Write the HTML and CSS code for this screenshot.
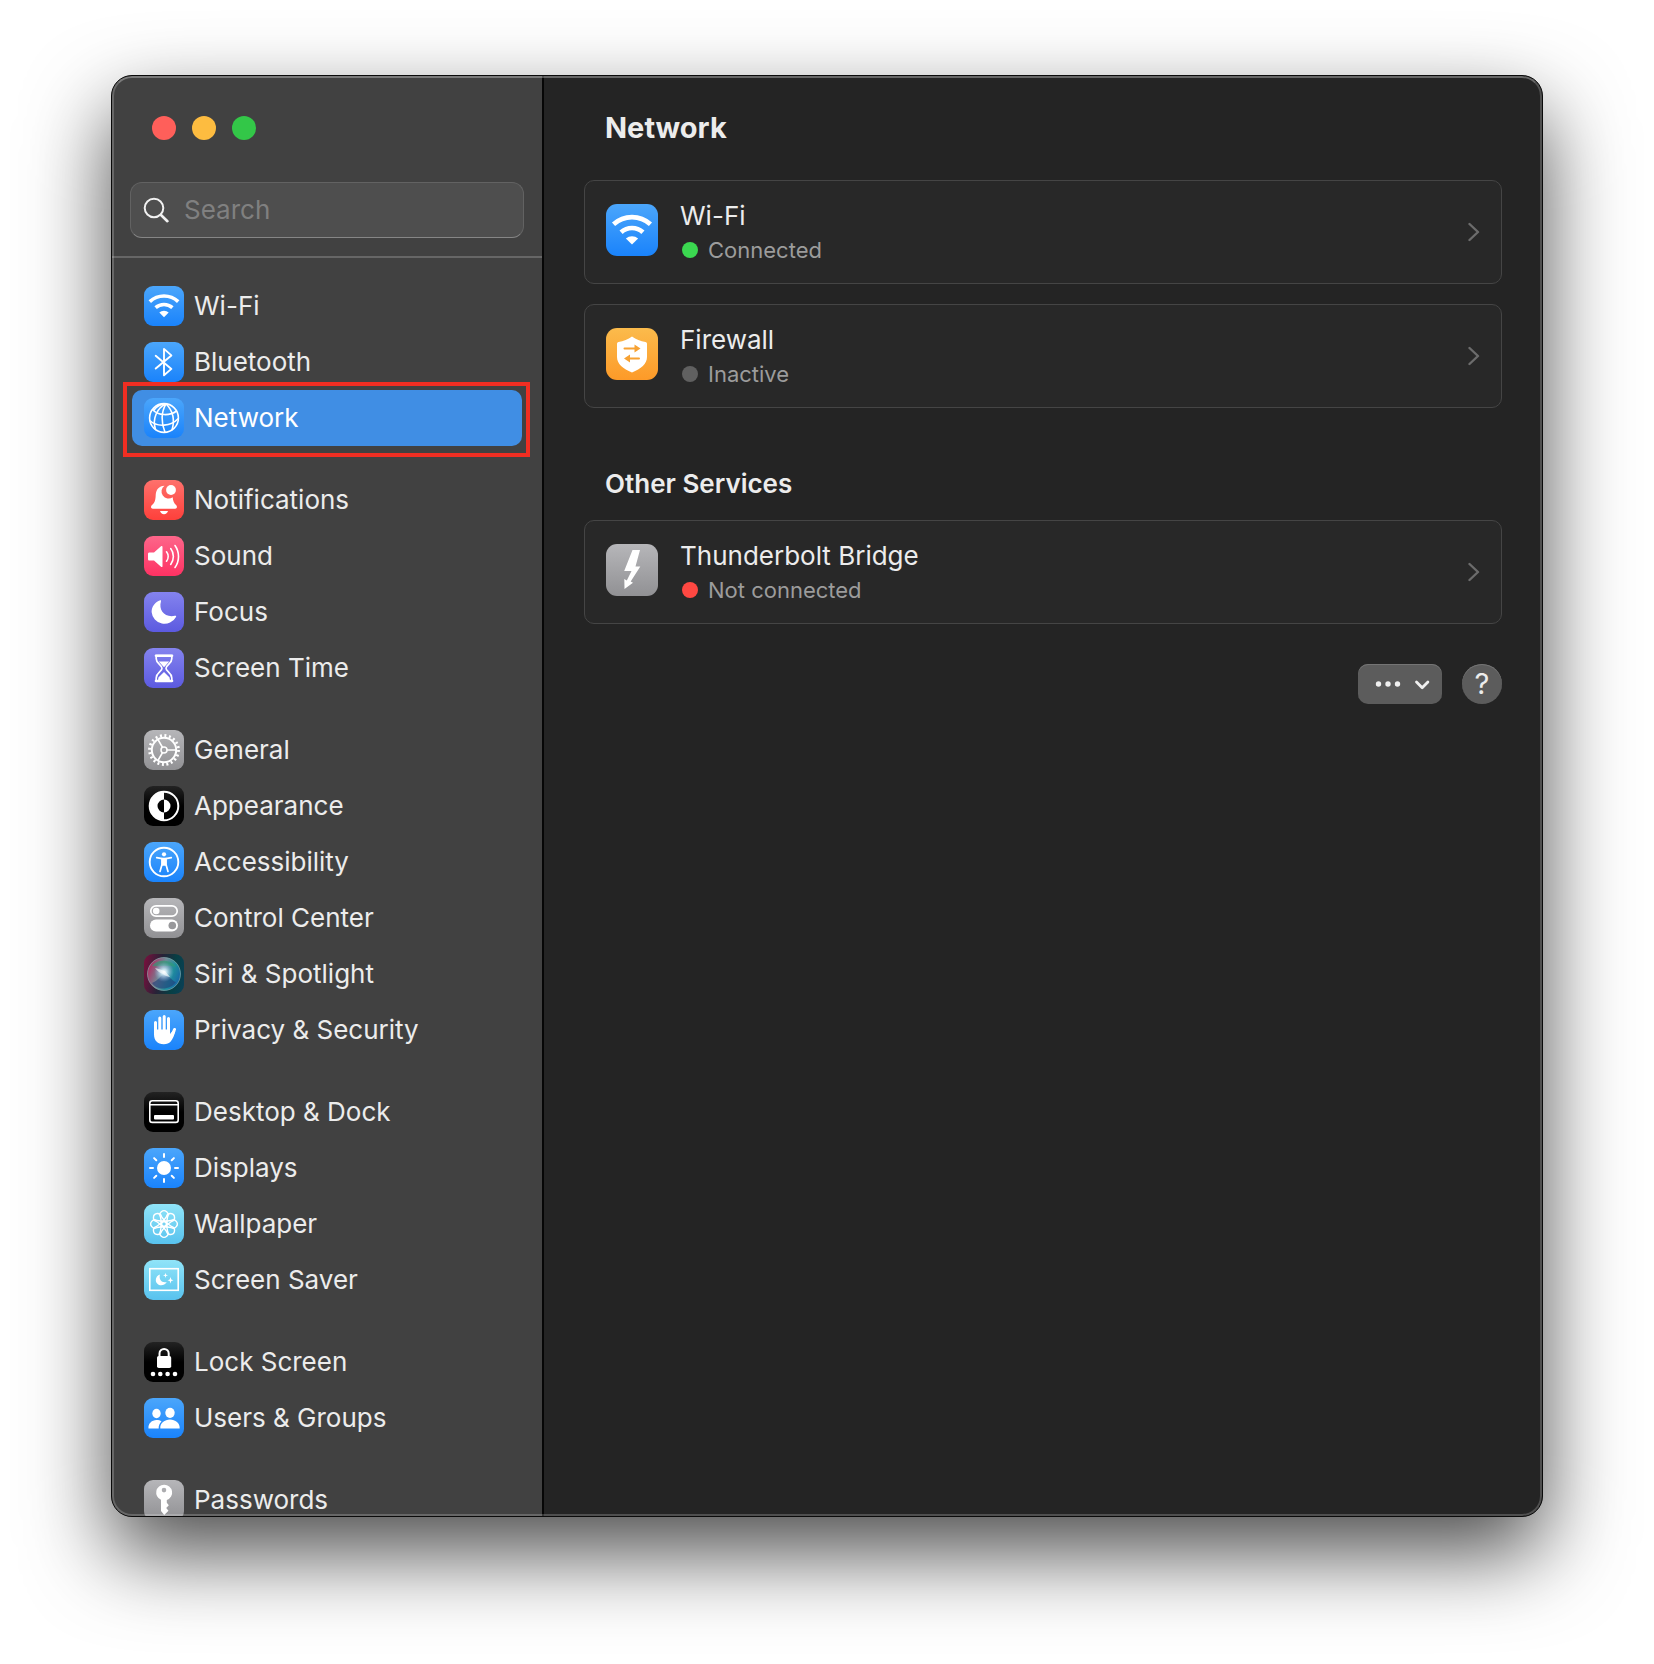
FILE: index.html
```html
<!DOCTYPE html>
<html lang="en">

<head>
  <meta charset="UTF-8">
  <meta name="viewport" content="width=device-width, initial-scale=1.0">
  <title>Network</title>
  <link rel="stylesheet" href="styles.css">
</head>

<body>
  <svg class="defs" aria-hidden="true">
    <symbol id="wifi" viewBox="0 0 40 40">
      <path d="M5.8 15.6a21 21 0 0 1 28.4 0M11.6 21.7a12.5 12.5 0 0 1 16.8 0" fill="none" stroke="#fff" stroke-width="3.6" />
      <path d="M20 31.2l-4.7-4.6a6.8 6.8 0 0 1 9.4 0z" fill="#fff" />
    </symbol>
    <symbol id="chevron" viewBox="0 0 12 20">
      <path d="M1.5 2l8.5 8-8.5 8" fill="none" stroke="#6c6c6c" stroke-width="2.4" stroke-linecap="round" stroke-linejoin="round" />
    </symbol>
  </svg>

  <div class="window">
    <aside class="sidebar">
      <div class="sidebar-header">
        <div class="window-controls">
          <button class="control close" aria-label="Close"></button>
          <button class="control minimize" aria-label="Minimize"></button>
          <button class="control zoom" aria-label="Zoom"></button>
        </div>
        <label class="search">
          <svg class="search-icon" viewBox="0 0 26 26" aria-hidden="true">
            <circle cx="11" cy="11" r="9.3" fill="none" stroke="#f0f0f0" stroke-width="2" />
            <path d="M18 18l6.4 6.2" stroke="#f0f0f0" stroke-width="2.6" stroke-linecap="round" />
          </svg>
          <input type="search" placeholder="Search" aria-label="Search">
        </label>
      </div>

      <nav class="menu">
        <ul>
          <li><a href="#"><svg class="icon blue" viewBox="0 0 40 40"><use href="#wifi" /></svg>Wi-Fi</a></li>
          <li><a href="#"><svg class="icon blue" viewBox="0 0 40 40">
                <path d="M11.7 13.8L27.4 26.9 20 33.3V6.9l7.4 6.5-15.7 13.2" fill="none" stroke="#fff" stroke-width="1.9" stroke-linecap="round" stroke-linejoin="round" />
              </svg>Bluetooth</a></li>
          <li class="active"><a href="#"><svg class="icon blue" viewBox="0 0 40 40">
                <g fill="none" stroke="#fff" stroke-width="1.6">
                  <circle cx="20" cy="20" r="14.4" />
                  <path d="M22 5.8C13 10 8 21 11.5 31.5M22 5.8C17 14 17 25 21 34.3M22 5.8C29 13 31 22 28 32" />
                  <path d="M8.5 11.5C14 18 26 18 32.5 13M5.8 22.5C13 29.5 27 28.5 34.3 20.5M22 5.8C18 6 13 8 10 12" />
                </g>
              </svg>Network</a></li>
        </ul>
        <ul>
          <li><a href="#"><svg class="icon red" viewBox="0 0 40 40" fill="#fff">
                <path d="M20.5 5.7c-5.6.3-8.6 4-8.8 9.3-.2 5.6-1 7.7-3.7 10-1.5 1.3-1.3 3.7.8 3.7h22.4c2.1 0 2.3-2.4.8-3.7-2.1-1.9-3-3.900-3.300-7.700a6.800 6.800 0 0 1-8.200-11.600z" />
                <circle cx="27" cy="10" r="4.900" />
                <path d="M16 31h8c-.5 2-2 3.200-4 3.200S16.500 33 16 31z" />
              </svg>Notifications</a></li>
          <li><a href="#"><svg class="icon pink" viewBox="0 0 40 40">
                <path d="M5.500 16.500h4.500l7-6.300c.7-.6 1.500-.3 1.500.6v19.400c0 .9-.8 1.200-1.500.6l-7-6.300H5.500c-1 0-1.500-.5-1.500-1.500v-5c0-1 .5-1.500 1.500-1.500z" fill="#fff" />
                <path d="M22.500 15.800a7.500 7.500 0 0 1 0 9.400M26.700 12.600a13 13 0 0 1 0 15.800M31 9.500a19 19 0 0 1 0 22" fill="none" stroke="#fff" stroke-width="1.600" stroke-linecap="round" />
              </svg>Sound</a></li>
          <li><a href="#"><svg class="icon purple" viewBox="0 0 40 40">
                <path d="M16.200 8.200c.7-.2 1 .3.800 1-2.700 8.800 3.800 16.700 13.800 14.600 1.200-.2 1.700.3 1.200 1.200A13 13 0 0 1 7.600 20c0-5.500 3.600-10.300 8.600-11.800z" fill="#fff" />
              </svg>Focus</a></li>
          <li><a href="#"><svg class="icon purple" viewBox="0 0 40 40">
                <path d="M12.200 7.500h15.600v3.200c0 5.300-5.800 6.300-5.800 9.600s5.800 4.400 5.800 9.700v3H12.200v-3c0-5.300 5.800-6.400 5.800-9.700s-5.800-4.300-5.800-9.600z" fill="none" stroke="#fff" stroke-width="1.700" stroke-linejoin="round" />
                <path d="M12 6.600h16c.8 0 1.300.5 1.300 1.200S28.800 9 28 9H12c-.8 0-1.300-.5-1.300-1.200s.5-1.200 1.300-1.200zm0 25.200h16c.8 0 1.300.5 1.300 1.200s-.5 1.200-1.300 1.200H12c-.8 0-1.300-.5-1.300-1.200s.5-1.200 1.300-1.200zM14.800 13.500h10.400L20 19.200zM20 24l5.600 5.500.4 3H14l.4-3z" fill="#fff" />
              </svg>Screen Time</a></li>
        </ul>
        <ul>
          <li><a href="#"><svg class="icon gray" viewBox="0 0 40 40">
                <g fill="none" stroke="#fff">
                  <circle cx="20" cy="20" r="14.500" stroke-width="2.800" stroke-dasharray="2 2.555" />
                  <circle cx="20" cy="20" r="12.200" stroke-width="2" />
                  <circle cx="20" cy="20" r="3" stroke-width="1.500" />
                  <path d="M23 20h9M18.500 17.400L14 9.600M18.500 22.600L14 30.400" stroke-width="1.700" />
                </g>
              </svg>General</a></li>
          <li><a href="#"><svg class="icon black" viewBox="0 0 40 40">
                <circle cx="20" cy="20" r="14.300" fill="none" stroke="#fff" stroke-width="2" />
                <path d="M20 6a14 14 0 0 0 0 28v-7.500a6.500 6.500 0 0 1 0-13zM20 13.500a6.500 6.500 0 0 1 0 13z" fill="#fff" />
              </svg>Appearance</a></li>
          <li><a href="#"><svg class="icon blue" viewBox="0 0 40 40">
                <circle cx="20" cy="20" r="14.300" fill="none" stroke="#fff" stroke-width="1.900" />
                <circle cx="20" cy="12.300" r="2.100" fill="#fff" />
                <path d="M12.700 15.600l5.300 1v5.800l-2 7M27.300 15.600l-5.300 1v5.800l2 7" fill="none" stroke="#fff" stroke-width="1.700" stroke-linecap="round" stroke-linejoin="round" />
                <path d="M17.500 15.800h5v8h-5z" fill="#fff" />
              </svg>Accessibility</a></li>
          <li><a href="#"><svg class="icon gray" viewBox="0 0 40 40">
                <rect x="6.800" y="7.800" width="26.400" height="10.400" rx="5.200" fill="none" stroke="#fff" stroke-width="1.700" />
                <circle cx="12.200" cy="13" r="3.300" fill="#fff" />
                <rect x="6" y="21.500" width="28" height="12" rx="6" fill="#fff" />
                <circle cx="28.300" cy="27.500" r="3.800" fill="#98989b" />
              </svg>Control Center</a></li>
          <li><a href="#"><svg class="icon siri" viewBox="0 0 40 40">
                <defs>
                  <radialGradient id="siri-core">
                    <stop offset="0" stop-color="#fff" />
                    <stop offset=".3" stop-color="#d8f2ff" stop-opacity=".8" />
                    <stop offset="1" stop-color="#8ad" stop-opacity="0" />
                  </radialGradient>
                  <linearGradient id="siri-orb" x1="0" y1=".3" x2="1" y2=".7">
                    <stop offset="0" stop-color="#b3265e" />
                    <stop offset=".4" stop-color="#6f8a96" />
                    <stop offset=".7" stop-color="#1f8f9c" />
                    <stop offset="1" stop-color="#1762a8" />
                  </linearGradient>
                </defs>
                <circle cx="20" cy="20" r="16.500" fill="url(#siri-orb)" stroke="#8db5b5" stroke-opacity=".6" />
                <path d="M8 12C13 5 27 5 32 13c-6-2-14 0-24-1z" fill="#2b9c74" opacity=".6" />
                <path d="M8 29c6-2 8-7 12-9 5 1 8 7 12 8-5 8-19 9-24 1z" fill="#213a78" opacity=".6" />
                <circle cx="20" cy="18" r="10" fill="url(#siri-core)" />
                <path d="M11 14c4 1 7 2 10 3l5 6c-3-1-5-1-7-3-3-1-6-3-8-6z" fill="#fff" opacity=".6" />
              </svg>Siri &amp; Spotlight</a></li>
          <li><a href="#"><svg class="icon blue" viewBox="0 0 40 40">
                <path d="M11.500 12.500v10M15.800 8v13M20.200 6.500V21M24.500 8.500V22M30.500 19.500l-3 7" fill="none" stroke="#fff" stroke-width="3" stroke-linecap="round" />
                <path d="M10 19.500h16v4.500l2.500-3 2.900.300c-1.400 4.700-2.700 8-4.700 10.200-1.700 1.900-3.900 2.700-6.900 2.700-6.300 0-9.800-3.700-9.800-10z" fill="#fff" />
              </svg>Privacy &amp; Security</a></li>
        </ul>
        <ul>
          <li><a href="#"><svg class="icon black" viewBox="0 0 40 40">
                <rect x="5.800" y="8.800" width="28.400" height="21.600" rx="2.500" fill="none" stroke="#fff" stroke-width="1.600" />
                <path d="M6 12.700h28" stroke="#fff" stroke-width="1.400" />
                <rect x="10" y="23" width="20" height="4.500" rx="1" fill="#fff" />
              </svg>Desktop &amp; Dock</a></li>
          <li><a href="#"><svg class="icon blue" viewBox="0 0 40 40">
                <circle cx="20" cy="20" r="7" fill="#fff" />
                <path d="M20 6v3M20 31v3M6 20h3M31 20h3M10.100 10.100l2.200 2.200M27.700 27.700l2.200 2.200M29.900 10.100l-2.200 2.200M12.300 27.700l-2.200 2.200" stroke="#fff" stroke-width="2" stroke-linecap="round" />
              </svg>Displays</a></li>
          <li><a href="#"><svg class="icon cyan" viewBox="0 0 40 40">
                <defs>
                  <path id="petal" d="M18 23.500L16.500 13a4.100 4.100 0 1 1 7 0L22 23.500" />
                </defs>
                <g fill="none" stroke="#fff" stroke-width="1.400">
                  <use href="#petal" />
                  <use href="#petal" transform="rotate(45 20 20)" />
                  <use href="#petal" transform="rotate(90 20 20)" />
                  <use href="#petal" transform="rotate(135 20 20)" />
                  <use href="#petal" transform="rotate(180 20 20)" />
                  <use href="#petal" transform="rotate(225 20 20)" />
                  <use href="#petal" transform="rotate(270 20 20)" />
                  <use href="#petal" transform="rotate(315 20 20)" />
                </g>
              </svg>Wallpaper</a></li>
          <li><a href="#"><svg class="icon cyan" viewBox="0 0 40 40">
                <rect x="5.800" y="8.700" width="28.400" height="21.600" fill="none" stroke="#fff" stroke-width="1.600" />
                <path d="M16 14.500c-1.500 5 1.800 8.700 6.800 7.500-3.500 5.500-11 3.500-11-2 0-2.500 1.700-4.700 4.200-5.500zM21.500 12.700l.6 2 1.900.6-1.900.6-.6 2-.6-2-1.900-.6 1.900-.6zM26.500 17l.8 2.400 2.200.8-2.200.8-.8 2.400-.8-2.400-2.200-.8 2.200-.8z" fill="#fff" />
              </svg>Screen Saver</a></li>
        </ul>
        <ul>
          <li><a href="#"><svg class="icon black" viewBox="0 0 40 40">
                <path d="M15.500 15v-3.500a4.600 4.600 0 0 1 9.200 0V15" fill="none" stroke="#fff" stroke-width="2" />
                <rect x="13" y="14" width="14.200" height="12" rx="1.800" fill="#fff" />
                <g fill="#fff">
                  <circle cx="9" cy="32" r="2.300" />
                  <circle cx="16.300" cy="32" r="2.300" />
                  <circle cx="23.600" cy="32" r="2.300" />
                  <circle cx="31" cy="32" r="2.300" />
                </g>
              </svg>Lock Screen</a></li>
          <li><a href="#"><svg class="icon blue" viewBox="0 0 40 40" fill="#fff">
                <ellipse cx="12.500" cy="15.500" rx="4.200" ry="4.700" />
                <ellipse cx="26" cy="14.800" rx="4.700" ry="5.100" />
                <path d="M4.500 30.500c-.6-5 3.500-8.500 8-8.500 2 0 3.800.5 5 1.400-2 1.800-3 4.300-2.800 7.100zM16.300 30.500c-.5-5.500 4.500-9 9.700-9s10.200 3.500 9.700 9z" />
              </svg>Users &amp; Groups</a></li>
        </ul>
        <ul>
          <li><a href="#"><svg class="icon gray" viewBox="0 0 40 40">
                <path d="M20 4.800a7.800 7.800 0 0 0-3 15V31l3.200 4 4.300-4.300-2.300-2.700 2.600-2.700-2-2.600V20A7.800 7.800 0 0 0 20 4.800zm0 3a2.300 2.300 0 1 1 0 4.600 2.300 2.300 0 0 1 0-4.600z" fill="#fff" />
              </svg>Passwords</a></li>
        </ul>
      </nav>
    </aside>

    <main class="content">
      <header class="content-header">
        <h1>Network</h1>
      </header>

      <div class="services">
        <a class="card" href="#">
          <svg class="icon large blue" viewBox="0 0 40 40"><use href="#wifi" /></svg>
          <span class="card-text">
            <span class="card-title">Wi-Fi</span>
            <span class="card-status"><span class="dot connected"></span>Connected</span>
          </span>
          <svg class="chevron" aria-hidden="true"><use href="#chevron" /></svg>
        </a>
        <a class="card" href="#">
          <svg class="icon large orange" viewBox="0 0 52 52">
            <path d="M26 8.500c4 3 8.500 4.500 13.500 5.500 1 .3 1.500 1 1.500 2v13c0 7-6 11.500-15 15.500-9-4-15-8.500-15-15.500V16c0-1 .5-1.700 1.500-2 5-1 9.500-2.500 13.500-5.500z" fill="#fff" />
            <g fill="none" stroke="#f7a233" stroke-width="2" stroke-linecap="round">
              <path d="M18.500 20.500h12M33 30.500H22" />
            </g>
            <path d="M28.500 16.500l6 4-6 4zM24 26.500l-6 4 6 4z" fill="#f7a233" />
          </svg>
          <span class="card-text">
            <span class="card-title">Firewall</span>
            <span class="card-status"><span class="dot inactive"></span>Inactive</span>
          </span>
          <svg class="chevron" aria-hidden="true"><use href="#chevron" /></svg>
        </a>
      </div>

      <h2>Other Services</h2>
      <div class="services">
        <a class="card" href="#">
          <svg class="icon large gray" viewBox="0 0 52 52">
            <path d="M26.500 6H34l-4.500 16.500h4.800l-9.600 15 2.300 1.300L18.500 45l-.2-10 2.500 1.400L25.500 27h-7.300z" fill="#fff" />
          </svg>
          <span class="card-text">
            <span class="card-title">Thunderbolt Bridge</span>
            <span class="card-status"><span class="dot disconnected"></span>Not connected</span>
          </span>
          <svg class="chevron" aria-hidden="true"><use href="#chevron" /></svg>
        </a>
      </div>

      <div class="actions">
        <button class="more" aria-label="More options">
          <svg viewBox="0 0 84 40">
            <g fill="#f0f0f0">
              <circle cx="20.500" cy="20" r="2.700" />
              <circle cx="30" cy="20" r="2.700" />
              <circle cx="39.500" cy="20" r="2.700" />
            </g>
            <path d="M58.500 18l5.700 5.700 5.700-5.700" fill="none" stroke="#f0f0f0" stroke-width="2.800" stroke-linecap="round" stroke-linejoin="round" />
          </svg>
        </button>
        <button class="help">?</button>
      </div>
    </main>
  </div>
</body>

</html>
```
FILE: styles.css
```css
* {
  box-sizing: border-box;
}

body {
  margin: 0;
  height: 100vh;
  padding: 75px 111px 147px;
  background: #fff;
  color: #ececec;
  font-family: Inter, "Liberation Sans", sans-serif;
  font-size: 26px;
  line-height: 34px;
  overflow: hidden;
}

a {
  color: inherit;
  text-decoration: none;
}

button {
  border: none;
  padding: 0;
  color: inherit;
  font: inherit;
}

.defs {
  display: none;
}

.window {
  position: relative;
  display: flex;
  height: 100%;
  border: 1px solid #0a0a0a;
  border-radius: 21px;
  background: #242424;
  box-shadow: 0 36px 84px rgba(0, 0, 0, 0.7);
  overflow: hidden;
}

/* light rim along the inside of the window */
.window::after {
  content: "";
  position: absolute;
  inset: 0;
  border: 2px solid rgba(255, 255, 255, 0.2);
  border-top-color: rgba(255, 255, 255, 0.3);
  border-radius: 20px;
  pointer-events: none;
}

/* Sidebar */
.sidebar {
  display: flex;
  flex-direction: column;
  flex: 0 0 432px;
  border-right: 2px solid #060606;
  background: #414141;
  overflow: hidden;
}

.sidebar-header {
  padding: 40px 18px 18px;
  border-bottom: 2px solid #666;
}

.window-controls {
  display: flex;
  gap: 16px;
  padding-left: 22px;
  margin-bottom: 42px;
}

.control {
  width: 24px;
  height: 24px;
  border-radius: 50%;
}

.close {
  background: #ff5f5a;
}

.minimize {
  background: #fdbc40;
}

.zoom {
  background: #33c748;
}

.search {
  display: flex;
  align-items: center;
  gap: 15px;
  height: 56px;
  padding: 0 12px;
  border: 1px solid #626262;
  border-bottom-color: #868686;
  border-radius: 12px;
  background: #4e4e4e;
}

.search-icon {
  flex: none;
  width: 26px;
  height: 26px;
}

.search input {
  flex: 1;
  min-width: 0;
  padding: 0;
  border: none;
  outline: none;
  background: none;
  color: inherit;
  font: inherit;
}

.search input::placeholder {
  color: #808080;
}

.menu {
  padding: 20px;
}

.menu ul {
  list-style: none;
  margin: 0 0 26px;
  padding: 0;
}

.menu a {
  display: flex;
  align-items: center;
  gap: 10px;
  height: 56px;
  padding: 0 12px;
  border-radius: 10px;
}

.menu .active {
  position: relative;
}

.menu .active a {
  background: #408ee4;
  color: #fff;
}

.menu .active::after {
  content: "";
  position: absolute;
  inset: -8px -8px -11px -9px;
  border: 4px solid #f02e22;
  pointer-events: none;
}

/* Icons */
.icon {
  flex: none;
  width: 40px;
  height: 40px;
  border-radius: 9px;
}

.icon.large {
  width: 52px;
  height: 52px;
  border-radius: 11px;
}

.blue {
  background: linear-gradient(#4ba6fb, #1a83fb);
}

.red {
  background: linear-gradient(#fe716c, #fe403b);
}

.pink {
  background: linear-gradient(#fd668a, #fe3263);
}

.purple {
  background: linear-gradient(#8483ee, #5c5ae0);
}

.gray {
  background: linear-gradient(#b6b6b9, #919194);
}

.black {
  background: linear-gradient(#232323, #000 50%);
}

.cyan {
  background: linear-gradient(#90e4f8, #58c2ee);
}

.orange {
  background: linear-gradient(#fbbb4c, #fd9a28);
}

.siri {
  background: linear-gradient(100deg, #7c0f3d, #272237 40%, #073f44 70%, #0a4058);
}

/* Content */
.content {
  flex: 1;
  min-width: 0;
  padding: 0 40px;
}

.content-header {
  display: flex;
  align-items: center;
  height: 104px;
  padding: 0 21px;
}

h1 {
  margin: 0;
  font-size: 29px;
  font-weight: 700;
  line-height: 36px;
}

h2 {
  margin: 58px 21px 18px;
  font-size: 26px;
  font-weight: 600;
  line-height: 36px;
}

.services {
  display: flex;
  flex-direction: column;
  gap: 20px;
}

.card {
  display: flex;
  align-items: center;
  height: 104px;
  padding: 0 21px;
  border: 1px solid #454545;
  border-radius: 10px;
  background: #282828;
}

.card .icon {
  margin-bottom: 4px;
}

.card-text {
  display: flex;
  flex-direction: column;
  flex: 1;
  margin-left: 22px;
  padding-top: 2px;
}

.card-status {
  display: flex;
  align-items: center;
  gap: 10px;
  padding-left: 2px;
  color: #9c9c9c;
  font-size: 22px;
}

.dot {
  width: 16px;
  height: 16px;
  border-radius: 50%;
}

.connected {
  background: #3bd850;
}

.inactive {
  background: #606060;
}

.disconnected {
  background: #ff4842;
}

.chevron {
  flex: none;
  width: 12px;
  height: 20px;
}

.actions {
  display: flex;
  justify-content: flex-end;
  gap: 20px;
  margin-top: 40px;
}

.more {
  width: 84px;
  height: 40px;
  border-radius: 10px;
  background: #5c5c5c;
  box-shadow: inset 0 1px 0 #747474;
}

.more svg {
  display: block;
}

.help {
  width: 40px;
  height: 40px;
  border-radius: 50%;
  background: #5c5c5c;
  box-shadow: inset 0 1px 0 #747474;
  font-size: 29px;
}
```
